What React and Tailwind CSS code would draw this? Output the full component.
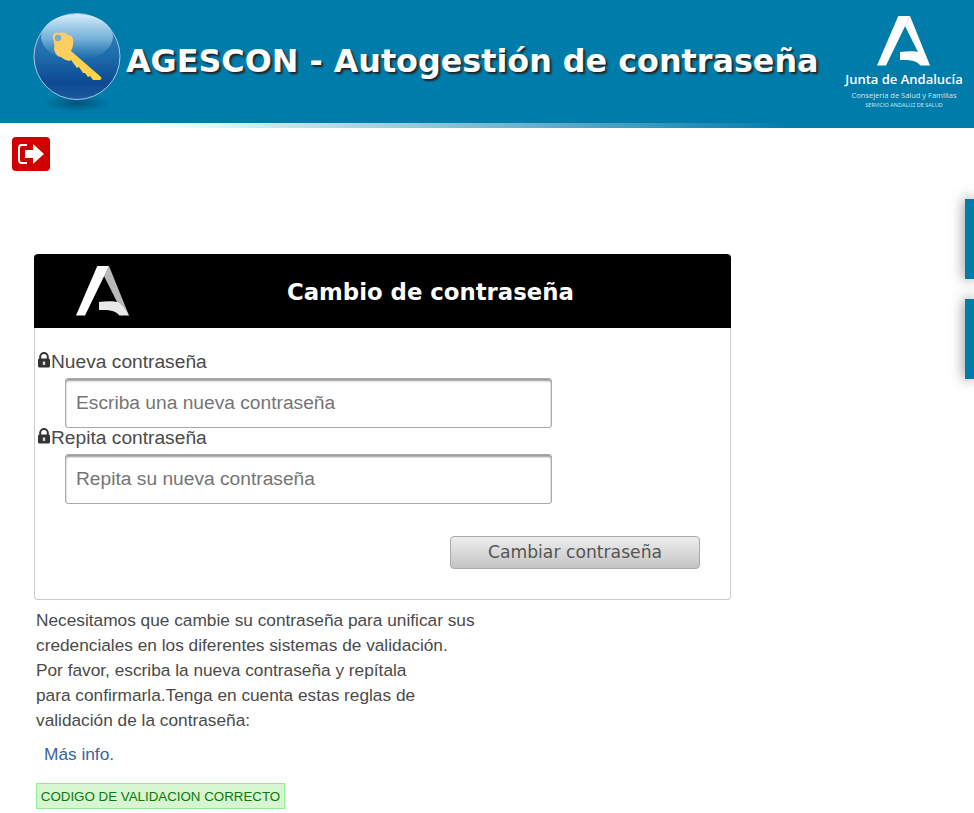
// AGESCON password self-service page
import { useId } from 'react'

function KeyBall() {
  const id = useId()
  return (
    <svg width="90" height="106" viewBox="0 0 90 106" className="shrink-0">
      <defs>
        <linearGradient id={id + 'b'} x1="0" y1="0" x2="0" y2="1">
          <stop offset="0" stopColor="#3d8ac2" />
          <stop offset="0.5" stopColor="#1c6cab" />
          <stop offset="0.8" stopColor="#0d4a92" />
          <stop offset="1" stopColor="#1b5a9e" />
        </linearGradient>
        <linearGradient id={id + 'h'} x1="0" y1="0" x2="0" y2="1">
          <stop offset="0" stopColor="#d8eefb" />
          <stop offset="0.55" stopColor="#8dc2e4" stopOpacity="0.75" />
          <stop offset="1" stopColor="#5a9fd0" stopOpacity="0" />
        </linearGradient>
        <linearGradient id={id + 'k'} x1="0" y1="0" x2="1" y2="1">
          <stop offset="0" stopColor="#ffcb70" />
          <stop offset="1" stopColor="#ffd63a" />
        </linearGradient>
        <radialGradient id={id + 's'}>
          <stop offset="0" stopColor="#024a70" stopOpacity="0.8" />
          <stop offset="1" stopColor="#024a70" stopOpacity="0" />
        </radialGradient>
      </defs>
      <ellipse cx="44" cy="90" rx="34" ry="9" fill={`url(#${id}s)`} />
      <circle cx="44" cy="43.5" r="43" fill={`url(#${id}b)`} stroke="#a9c6e0" strokeWidth="1" />
      <ellipse cx="44" cy="24" rx="36" ry="23" fill={`url(#${id}h)`} />
      <path d="M20 25C19 21 22 19 26 20C30 19 33 20 35 22C39 22 41 26 40 31C40 35 38 37 38 38L68 64C69 66 68 67 66 67L60 67L57 63L55 64L52 60L50 60L46 54L44 55L38 47L36 48C33 47 30 46 28 44C25 44 22 41 21 36C22 32 21 29 20 25z" fill={`url(#${id}k)`} />
      <circle cx="25" cy="25" r="3.2" fill="#76aed0" />
    </svg>
  )
}

function JuntaA({ className, right = '#fff', left = '#fff', curve = '#fff' }) {
  return (
    <svg viewBox="0 0 54 50" className={className}>
      <path d="M33 0L53 49.5L49 45L40.5 35L28 10z" fill={right} />
      <path d="M21.3 0H33L9 49.5H0z" fill={left} />
      <path d="M23 36C30 35 38 35 42 36C46 39 50 44 53 49.5H43.5C40 45 34 43.5 23 44z" fill={curve} />
    </svg>
  )
}

function Lock() {
  return (
    <svg width="14" height="16" viewBox="0 0 14 16" className="shrink-0">
      <path d="M3.2 7V4.8a3.8 3.8 0 017.6 0V7" fill="none" stroke="#333" strokeWidth="2" />
      <rect x="1" y="6.5" width="12" height="9" rx="1.5" fill="#333" />
      <rect x="5.8" y="9.5" width="2.4" height="3.4" fill="#ddd" />
    </svg>
  )
}

function Field({ label, placeholder }) {
  return (
    <div>
      <label className="flex items-start h-[26px] pl-[2px] text-[19.2px] leading-[20px] text-[#4a4a4a]">
        <Lock />
        {label}
      </label>
      <input
        placeholder={placeholder}
        className="block ml-[30px] w-[487px] h-[50px] px-[10px] text-[19.2px] bg-white border border-[#a9a9a9] rounded-[3px] shadow-[inset_0_2px_2px_#999] placeholder:text-[#757575] outline-none"
      />
    </div>
  )
}

export default function App() {
  return (
    <div className="relative h-[813px] overflow-hidden bg-white font-['Liberation_Sans',Arial,sans-serif]">
      {/* Header */}
      <header className="h-[128px] bg-[linear-gradient(to_right,#fff_150px,#007cab_790px)]">
        <div className="h-[123px] bg-[#007cab] flex items-start pl-[33px]">
          <div className="pt-[13px]"><KeyBall /></div>
          <h1 className="ml-[3px] mt-[41px] text-[31.8px] leading-[40px] font-bold whitespace-nowrap text-white font-['DejaVu_Sans',Verdana,sans-serif] [text-shadow:2px_2px_2px_#222]">
            AGESCON - Autogestión de contraseña
          </h1>
          <div className="ml-auto mr-[10px] w-[120px] pt-[16px] flex flex-col items-center text-white font-['Open_Sans',sans-serif]">
            <JuntaA className="w-[54px] h-[50px]" />
            <div className="mt-[4px] text-[13px] leading-[18px] font-semibold whitespace-nowrap">Junta de Andalucía</div>
            <div className="mt-[2px] text-[7.5px] leading-[10px] text-[#cfe6f0] whitespace-nowrap">Consejería de Salud y Familias</div>
            <div className="mt-[1px] text-[5.5px] leading-[8px] text-[#d9ebf3] whitespace-nowrap">SERVICIO ANDALUZ DE SALUD</div>
          </div>
        </div>
      </header>

      {/* Salir */}
      <div className="pl-[12px] pt-[9px]">
        <button className="w-[38px] h-[34px] rounded-[4px] bg-[#d00000] flex items-center justify-center">
          <svg width="28" height="22" viewBox="0 0 28 22">
            <path d="M10 2H5a3 3 0 00-3 3v12a3 3 0 003 3h5" fill="none" stroke="#fff" strokeWidth="2" />
            <path d="M8 7h8V1l11 10-11 10v-6H8z" fill="#fff" />
          </svg>
        </button>
      </div>

      {/* Card */}
      <main className="pl-[34px] pt-[83px]">
        <section className="w-[697px]">
          <div className="relative h-[74px] rounded-t-[4px] bg-black flex items-center">
            <JuntaA className="ml-[42px] w-[54px] h-[50px]" right="#b9b9b9" curve="#e8e8e8" />
            <h2 className="absolute left-[253px] top-[23px] text-[22.8px] leading-[30px] font-bold text-white whitespace-nowrap font-['DejaVu_Sans',Verdana,sans-serif]">
              Cambio de contraseña
            </h2>
          </div>
          <div className="h-[272px] pt-[24px] rounded-b-[4px] border border-t-0 border-[#ccc]">
            <Field label="Nueva contraseña" placeholder="Escriba una nueva contraseña" />
            <Field label="Repita contraseña" placeholder="Repita su nueva contraseña" />
            <div className="flex justify-end pr-[30px] pt-[32px]">
              <button className="w-[250px] h-[33px] rounded-[4px] border border-[#aaa] bg-[linear-gradient(#eee,#c4c4c4)] text-[17.2px] text-[#555] font-['DejaVu_Sans',Verdana,sans-serif]">
                Cambiar contraseña
              </button>
            </div>
          </div>
        </section>

        <p className="mt-[8px] pl-[2px] text-[17.28px] leading-[25px] text-[#4a4a4a] whitespace-nowrap">
          Necesitamos que cambie su contraseña para unificar sus<br />
          credenciales en los diferentes sistemas de validación.<br />
          Por favor, escriba la nueva contraseña y repítala<br />
          para confirmarla.Tenga en cuenta estas reglas de<br />
          validación de la contraseña:
        </p>
        <a className="block mt-[9px] pl-[10px] text-[17.28px] leading-[25px] text-[#3a6398]">Más info.</a>
        <div className="mt-[16px] ml-[2px] w-[249px] h-[26px] border border-[#8fef8f] bg-[#d6f5d0] text-[13.33px] leading-[26px] text-center text-[#0a7a0a] whitespace-nowrap">
          CODIGO DE VALIDACION CORRECTO
        </div>
      </main>

      {/* Side tabs */}
      <div className="absolute right-0 top-[199px] w-[9px] h-[80px] bg-[#007cab] shadow-[0_0_14px_#777]" />
      <div className="absolute right-0 top-[299px] w-[9px] h-[80px] bg-[#007cab] shadow-[0_0_14px_#777]" />
    </div>
  )
}
